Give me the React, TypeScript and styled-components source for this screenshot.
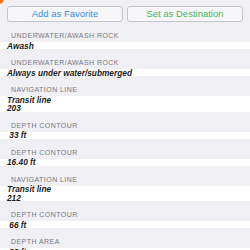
import React from "react";
import styled, { createGlobalStyle } from "styled-components";

const Global = createGlobalStyle`
  html, body { margin: 0; padding: 0; background: #efeff4; }
  body { font-family: "Liberation Sans", Arial, sans-serif; }
`;

const Page = styled.div`
  position: relative;
  width: 250px;
  height: 250px;
  overflow: hidden;
  background: #efeff4;
`;

const Corner = styled.div`
  position: absolute;
  left: -6px;
  top: -6px;
  width: 10px;
  height: 10px;
  border-radius: 50%;
  background: #f07a2a;
`;

const ButtonRow = styled.div`
  display: flex;
  gap: 4px;
  padding: 6px 7px 0 7px;
  height: 16px;
  margin-bottom: 1px;
`;

const ActionButton = styled.button<{ $color: string }>`
  flex: 1;
  height: 16px;
  margin: 0;
  padding: 0;
  border: 1px solid #c4c4c9;
  border-radius: 3px;
  background: #f6f6f9;
  color: ${(p) => p.$color};
  font-family: "Liberation Sans", Arial, sans-serif;
  font-size: 9.5px;
  line-height: 14px;
  text-align: center;
`;

const Header = styled.div`
  height: 18px;
  display: flex;
  align-items: flex-end;
  box-sizing: border-box;
  padding: 0 0 2px 11px;
  color: #7a7a80;
  font-size: 7px;
  line-height: 7px;
  letter-spacing: 0.45px;
  text-transform: uppercase;
`;

const Value = styled.div`
  background: #ffffff;
  padding: 0.5px 0 0 7px;
  box-shadow: inset 0 0.5px 0 #e2e2e6, inset 0 -0.5px 0 #e2e2e6;
`;

const Line = styled.div`
  font-size: 8.3px;
  line-height: 8.5px;
  font-style: italic;
  font-weight: bold;
  color: #1a1a1a;
  white-space: pre;
`;

const items: { title: string; lines: string[] }[] = [
  { title: "Underwater/awash rock", lines: ["Awash"] },
  { title: "Underwater/awash rock", lines: ["Always under water/submerged"] },
  { title: "Navigation line", lines: ["Transit line", "203"] },
  { title: "Depth contour", lines: [" 33 ft"] },
  { title: "Depth contour", lines: ["16.40 ft"] },
  { title: "Navigation line", lines: ["Transit line", "212"] },
  { title: "Depth contour", lines: [" 66 ft"] },
  { title: "Depth area", lines: [" 33 ft"] },
];

export default function App() {
  return (
    <Page>
      <Global />
      <Corner />
      <ButtonRow>
        <ActionButton $color="#3d8fe0">Add as Favorite</ActionButton>
        <ActionButton $color="#4fb559">Set as Destination</ActionButton>
      </ButtonRow>
      {items.map((it, i) => (
        <React.Fragment key={i}>
          <Header>{it.title}</Header>
          <Value>
            {it.lines.map((l, j) => (
              <Line key={j}>{l}</Line>
            ))}
          </Value>
        </React.Fragment>
      ))}
    </Page>
  );
}
